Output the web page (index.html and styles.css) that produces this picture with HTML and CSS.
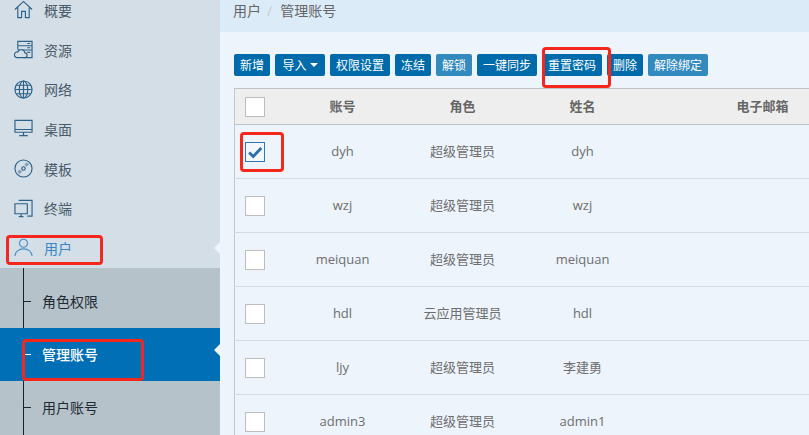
FILE: index.html
```html
<!DOCTYPE html>
<html lang="zh-CN">
<head>
<meta charset="utf-8">
<title>管理账号</title>
<link rel="stylesheet" href="styles.css">
</head>
<body>
<div class="app">
  <aside class="sidebar">
    <nav class="nav">
      <a class="nav-item"><svg class="nav-icon" viewBox="0 0 20 20"><path d="M1 10 10 1.500 19 10M4 8v10.500h4v-6.500h4v6.500h4V8"/></svg><span>概要</span></a>
      <a class="nav-item"><svg class="nav-icon" viewBox="0 0 20 20"><path d="M4 10V1.500h15v17H10M4 6h15M4 10.500h15M14 3.700h3M14 8.200h3M14 13h3"/><path d="M3 18.500h8a2.500 2.500 0 0 0 .5-5 4 4 0 0 0-7.500-1 3 3 0 0 0-1 6z" class="fill"/></svg><span>资源</span></a>
      <a class="nav-item"><svg class="nav-icon" viewBox="0 0 20 20"><circle cx="10" cy="10" r="9"/><ellipse cx="10" cy="10" rx="4.500" ry="9"/><path d="M10 1v18M1 10h18M2.200 5.500h15.600M2.200 14.500h15.600"/></svg><span>网络</span></a>
      <a class="nav-item"><svg class="nav-icon" viewBox="0 0 20 20"><path d="M1 1.500h18v12.500H1zM1 11h18M10 14v3M5.500 17.500h9"/></svg><span>桌面</span></a>
      <a class="nav-item"><svg class="nav-icon" viewBox="0 0 20 20"><circle cx="10" cy="10" r="9"/><circle cx="10" cy="10" r="1.800"/><path d="M12.500 7.500 15.500 5M11.500 6.500 14 4M8 12.500l-3 3M6.500 11.500l-2.500 2.500" class="faint"/></svg><span>模板</span></a>
      <a class="nav-item"><svg class="nav-icon" viewBox="0 0 20 20"><path d="M5 1.500h14v16.500h-5M1 5h13v10.500H1zM7.500 15.500v3M5 18.500h5"/></svg><span>终端</span></a>
      <a class="nav-item nav-current"><svg class="nav-icon" viewBox="0 0 20 20"><circle cx="10" cy="5.500" r="4.200"/><path d="M1 19c0-4.500 4-7.500 9-7.500s9 3 9 7.500"/></svg><span>用户</span></a>
    </nav>
    <ul class="subnav">
      <li class="sub-item"><span class="tick"></span>角色权限</li>
      <li class="sub-item sub-active"><span class="tick"></span>管理账号</li>
      <li class="sub-item"><span class="tick"></span>用户账号</li>
    </ul>
  </aside>
  <main class="main">
    <header class="crumbs"><span>用户</span><span class="sep">/</span><span>管理账号</span></header>
    <div class="toolbar">
      <button class="btn">新增</button>
      <button class="btn btn-drop">导入<i class="caret"></i></button>
      <button class="btn">权限设置</button>
      <button class="btn">冻结</button>
      <button class="btn btn-light">解锁</button>
      <button class="btn">一键同步</button>
      <button class="btn">重置密码</button>
      <button class="btn">删除</button>
      <button class="btn btn-light">解除绑定</button>
    </div>
    <table class="table">
      <colgroup><col class="c0"><col class="c1"><col class="c1"><col class="c1"><col class="c4"></colgroup>
      <thead>
        <tr><th><span class="cb"></span></th><th>账号</th><th>角色</th><th>姓名</th><th>电子邮箱</th></tr>
      </thead>
      <tbody>
        <tr><td><span class="cb cb-on"><svg viewBox="0 0 20 20"><path d="M3.500 10.500 8 15l9-9.500"/></svg></span></td><td>dyh</td><td>超级管理员</td><td>dyh</td><td></td></tr>
        <tr><td><span class="cb"></span></td><td>wzj</td><td>超级管理员</td><td>wzj</td><td></td></tr>
        <tr><td><span class="cb"></span></td><td>meiquan</td><td>超级管理员</td><td>meiquan</td><td></td></tr>
        <tr><td><span class="cb"></span></td><td>hdl</td><td>云应用管理员</td><td>hdl</td><td></td></tr>
        <tr><td><span class="cb"></span></td><td>ljy</td><td>超级管理员</td><td>李建勇</td><td></td></tr>
        <tr><td><span class="cb"></span></td><td>admin3</td><td>超级管理员</td><td>admin1</td><td></td></tr>
      </tbody>
    </table>
  </main>
</div>
<div class="mark mark-user"></div>
<div class="mark mark-sub"></div>
<div class="mark mark-reset"></div>
<div class="mark mark-check"></div>
</body>
</html>
```
FILE: styles.css
```css
* { box-sizing: border-box; }
html, body { margin: 0; height: 100%; overflow: hidden; }
body {
  position: relative;
  font-family: "Open Sans", "Noto Sans CJK SC", sans-serif;
  font-size: 13px;
  color: #666;
  background: #edf4fc;
}
.app { display: flex; width: 809px; height: 435px; overflow: hidden; }
.sidebar { flex: 0 0 220px; background: #d3dee7; }
.nav { margin-top: -10px; }
.nav-item {
  position: relative;
  display: flex;
  align-items: center;
  gap: 11px;
  height: 39.700px;
  padding-left: 14px;
  font-size: 14px;
  color: #4a5a68;
}
.nav-icon { width: 19px; height: 19px; fill: none; stroke: #2c6188; stroke-width: 1.200; flex: none; }
.nav-icon .fill { fill: #d3dee7; }
.nav-icon .faint { stroke: #7f9db5; stroke-width: 1.500; }
.nav-current { color: #3a85c4; }
.nav-current .nav-icon { stroke: #4c8dc5; }
.nav-current::after, .sub-active::after {
  content: "";
  position: absolute;
  right: 0;
  top: 50%;
  margin-top: -6px;
  border: 6px solid transparent;
  border-left-width: 0;
  border-right-color: #edf4fc;
}
.sub-active::after { margin-top: -10px; }
.subnav {
  list-style: none;
  margin: 0;
  padding: 7px 0 0;
  background: #b5c2ca;
  height: 180px;
  background-image: linear-gradient(#17202a, #17202a);
  background-size: 1px 100%;
  background-position: 23px 0;
  background-repeat: no-repeat;
}
.sub-item {
  position: relative;
  display: flex;
  align-items: center;
  height: 53px;
  padding-left: 23px;
  font-size: 14px;
  color: #1f2a33;
}
.tick { width: 8px; height: 1px; background: currentColor; margin-right: 11px; }
.sub-active { background: #006fb5; color: #fff; font-weight: 500; }
.main { flex: 1; min-width: 0; }
.crumbs {
  display: flex;
  align-items: center;
  height: 32px;
  padding: 0 13px 12px;
  background: #dcebf8;
  font-size: 14px;
  color: #666;
}
.sep { margin: 0 8px 0 6px; color: #c4ccd4; }
.toolbar { display: flex; gap: 5px; margin: 22px 0 12px 14px; }
.btn {
  display: flex;
  align-items: center;
  justify-content: center;
  height: 22px;
  padding: 0 6px;
  border: 0;
  border-radius: 2px;
  background: #006bab;
  color: #fff;
  font: inherit;
  font-size: 12px;
  white-space: nowrap;
}
.btn-drop { width: 50px; }
.btn-light { background: #338abf; }
.caret {
  margin-left: 3px;
  border: 4px solid transparent;
  border-top-color: #fff;
  border-bottom-width: 0;
}
.table {
  table-layout: fixed;
  width: 648px;
  margin-left: 14px;
  border-collapse: collapse;
  text-align: center;
  border-left: 1px solid #c4c8cc;
}
.c0 { width: 48px; }
.c1 { width: 120px; }
.c4 { width: 240px; }
th {
  height: 36px;
  padding: 0 0 3px;
  background: #eeeeee;
  border-top: 1px solid #bfc3c7;
  border-bottom: 1px solid #bfc3c7;
  font-weight: 600;
  color: #666;
}
td {
  height: 54px;
  padding: 0 0 2px;
  border-bottom: 1px solid #d7dade;
  color: #6e6e6e;
}
th:first-child, td:first-child { text-align: left; padding: 0 0 0 10px; }
.cb {
  display: block;
  width: 20px;
  height: 20px;
  background: #fff;
  border: 1px solid #bdbdbd;
}
.cb-on { border-color: #2d78b8; background: #f4f8fc; }
.cb-on svg { display: block; width: 18px; height: 18px; fill: none; stroke: #2d6fae; stroke-width: 3.200; }
.mark {
  position: absolute;
  border: 3px solid #f5261c;
  border-radius: 4px;
  pointer-events: none;
}
.mark-user { left: 6px; top: 235px; width: 97px; height: 30px; }
.mark-sub { left: 22px; top: 339px; width: 122px; height: 42px; }
.mark-reset { left: 542px; top: 47px; width: 69px; height: 41px; }
.mark-check { left: 240px; top: 132px; width: 44px; height: 40px; }
```
